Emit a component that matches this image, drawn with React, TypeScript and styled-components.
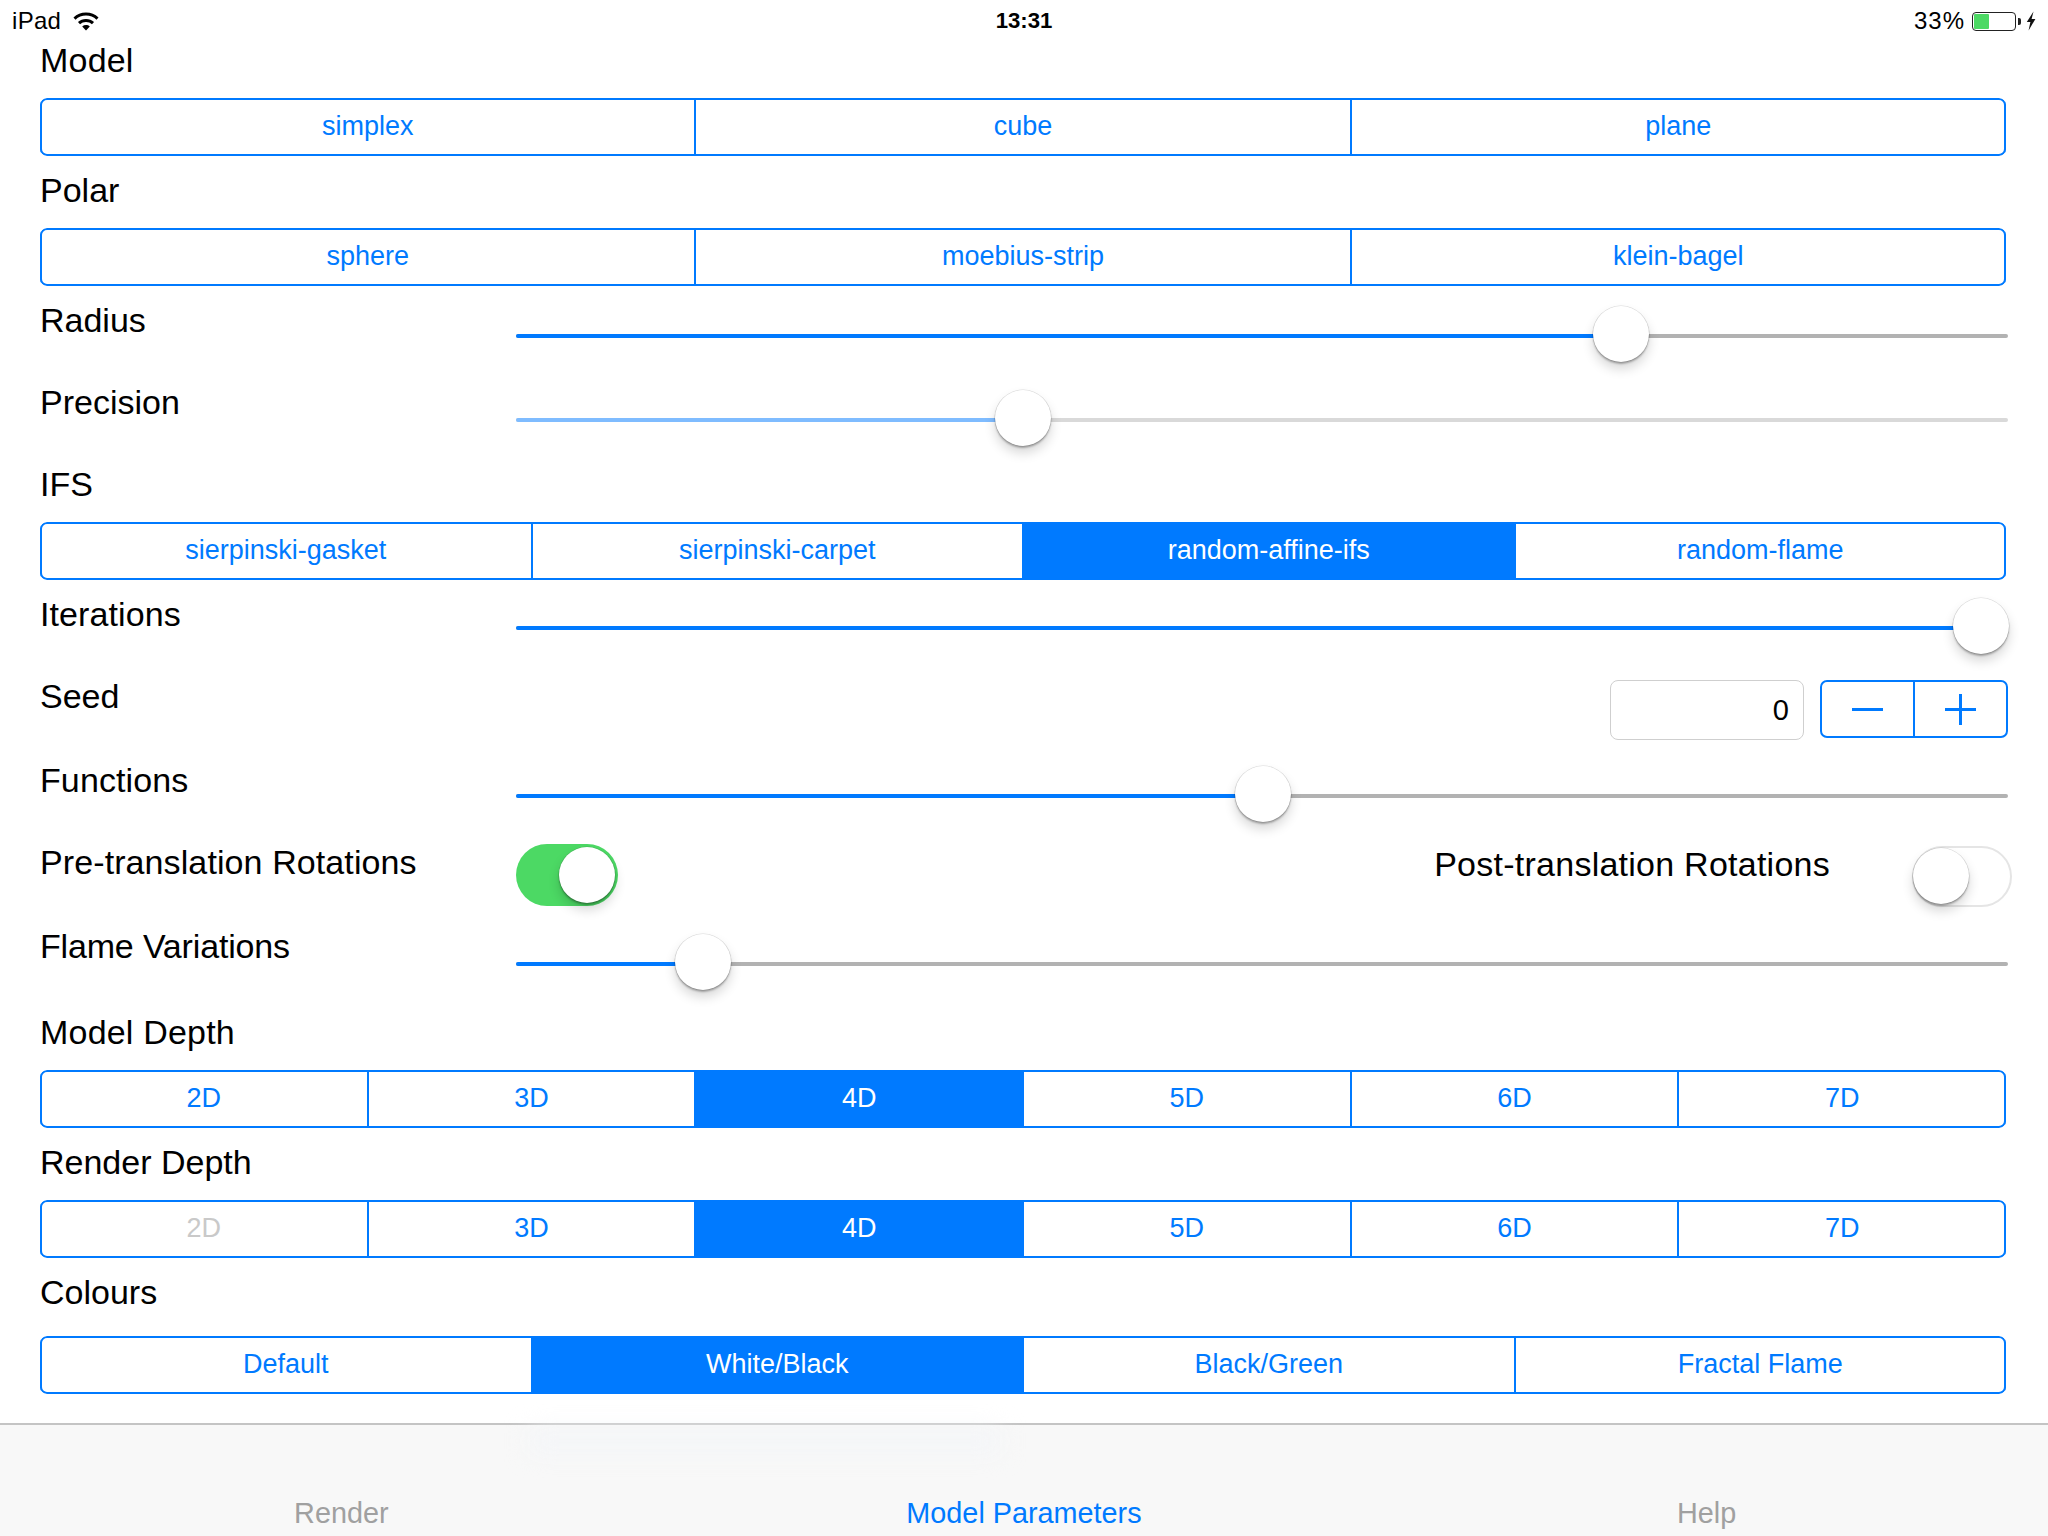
import React from "react";
import styled, { createGlobalStyle } from "styled-components";

const BLUE = "#007aff";

const Global = createGlobalStyle`
  html, body { margin: 0; padding: 0; background: #fff; }
  body { font-family: "Liberation Sans", Arial, sans-serif; color: #000; }
  * { box-sizing: border-box; }
`;

const Page = styled.div`
  width: 2048px;
  height: 1536px;
  display: flex;
  flex-direction: column;
  overflow: hidden;
  background: #fff;
`;

const StatusBar = styled.div`
  height: 40px;
  flex: none;
  display: grid;
  grid-template-columns: 1fr auto 1fr;
  align-items: center;
  padding: 2px 12px 0 12px;
  font-size: 24px;
`;

const StatusLeft = styled.div`
  display: flex;
  align-items: center;
  gap: 12px;
  letter-spacing: 0.3px;
`;

const StatusTime = styled.div`
  font-size: 22.2px;
  font-weight: 700;
`;

const StatusRight = styled.div`
  display: flex;
  align-items: center;
  justify-content: flex-end;
`;

const Percent = styled.span`
  margin-right: 7px;
  letter-spacing: 1px;
`;

const Battery = styled.div`
  width: 44px;
  height: 19px;
  border: 1px solid #222;
  border-radius: 4px;
  padding: 1px;
  display: flex;
`;

const BatteryFill = styled.div`
  width: 15px;
  background: #4cd964;
  border-radius: 1px;
`;

const BatteryTip = styled.div`
  width: 3px;
  height: 7px;
  margin: 0 5px 0 2px;
  background: #222;
  border-radius: 0 2px 2px 0;
`;

const Content = styled.div`
  flex: 1;
  padding: 0 40px;
`;

const Caption = styled.div<{ $spacing?: number }>`
  font-size: 34px;
  line-height: 40px;
  white-space: nowrap;
  letter-spacing: ${(p) => p.$spacing ?? 0}px;
`;

const CaptionRow = styled.div<{ $height?: number }>`
  height: ${(p) => p.$height ?? 58}px;
`;

const Segments = styled.div<{ $count: number }>`
  position: relative;
  display: grid;
  grid-template-columns: repeat(${(p) => p.$count}, 1fr);
  height: 58px;
  margin: 0 2px 14px 0;
  border-radius: 7px;
  overflow: hidden;
  &::after {
    content: "";
    position: absolute;
    inset: 0;
    border: 2px solid ${BLUE};
    border-radius: 7px;
    pointer-events: none;
  }
`;

const Segment = styled.div<{ $selected?: boolean; $disabled?: boolean }>`
  display: flex;
  align-items: center;
  justify-content: center;
  padding-bottom: 1px;
  font-size: 27px;
  background: ${(p) => (p.$selected ? BLUE : "#fff")};
  color: ${(p) => (p.$selected ? "#fff" : p.$disabled ? "#c9c9c9" : BLUE)};
  box-shadow: inset 1px 0 0 ${BLUE}, inset -1px 0 0 ${BLUE};
`;

const ControlRow = styled.div<{ $height: number }>`
  height: ${(p) => p.$height}px;
  display: grid;
  grid-template-columns: 476px 1fr;
`;

const SliderArea = styled.div<{ $trackTop: number }>`
  padding-top: ${(p) => p.$trackTop}px;
`;

const Track = styled.div<{ $dim?: boolean }>`
  position: relative;
  height: 4px;
  border-radius: 2px;
  background: ${(p) => (p.$dim ? "#d9d9d9" : "#b2b2b2")};
`;

const TrackFill = styled.div<{ $dim?: boolean }>`
  position: absolute;
  left: 0;
  top: 0;
  bottom: 0;
  border-radius: 2px 0 0 2px;
  background: ${(p) => (p.$dim ? "#7fbcff" : BLUE)};
`;

const Knob = styled.div`
  width: 56px;
  height: 56px;
  border-radius: 50%;
  background: #fff;
  box-shadow: 0 0 0 0.5px rgba(0, 0, 0, 0.14), 0 2px 2px rgba(0, 0, 0, 0.28),
    0 7px 12px rgba(0, 0, 0, 0.16);
`;

const SliderKnob = styled(Knob)`
  position: absolute;
  top: -28px;
`;

const SeedControls = styled.div`
  display: flex;
  justify-content: flex-end;
  align-items: flex-start;
  gap: 16px;
  padding-top: 4px;
`;

const SeedField = styled.div`
  width: 194px;
  height: 60px;
  border: 1px solid #cfcfcf;
  border-radius: 8px;
  display: flex;
  align-items: center;
  justify-content: flex-end;
  padding: 0 14px 0 0;
  font-size: 29px;
`;

const Stepper = styled.div`
  width: 188px;
  height: 58px;
  border: 2px solid ${BLUE};
  border-radius: 7px;
  display: flex;
`;

const StepButton = styled.div`
  flex: 1 1 0;
  display: flex;
  align-items: center;
  justify-content: center;
  & + & {
    border-left: 2px solid ${BLUE};
  }
`;

const ToggleArea = styled.div`
  display: flex;
  justify-content: space-between;
  align-items: flex-start;
  margin-right: -4px;
  padding-top: 2px;
`;

const PostGroup = styled.div`
  display: flex;
  align-items: flex-start;
  gap: 82px;
`;

const Switch = styled.div<{ $on?: boolean }>`
  position: relative;
  width: ${(p) => (p.$on ? 102 : 100)}px;
  height: ${(p) => (p.$on ? 62 : 61)}px;
  margin-top: ${(p) => (p.$on ? 0 : 2)}px;
  border-radius: 31px;
  background: ${(p) => (p.$on ? "#4cd964" : "#fff")};
  border: ${(p) => (p.$on ? "none" : "2px solid #e5e5e5")};
`;

const SwitchKnob = styled(Knob)<{ $on?: boolean }>`
  position: absolute;
  top: ${(p) => (p.$on ? 3 : 0)}px;
  ${(p) => (p.$on ? "right: 3px;" : "left: -1px;")}
`;

const TabBar = styled.div`
  position: relative;
  flex: none;
  height: 113px;
  background: #f8f8f8;
  border-top: 2px solid #c4c4c4;
  display: grid;
  grid-template-columns: repeat(3, 1fr);
  &::before {
    content: "";
    position: absolute;
    left: 530px;
    top: 6px;
    width: 470px;
    height: 20px;
    background: #f3f5f8;
    filter: blur(12px);
  }
`;

const Tab = styled.div<{ $active?: boolean }>`
  position: relative;
  display: flex;
  align-items: flex-end;
  justify-content: center;
  padding-bottom: 6px;
  font-size: 28.8px;
  line-height: 34px;
  color: ${(p) => (p.$active ? BLUE : "#a0a0a0")};
`;

const Wifi = () => (
  <svg width="26" height="19" viewBox="0 0 26 19" fill="none">
    <path d="M1.5 6.6C7.8 0.6 18.2 0.6 24.5 6.6" stroke="#000" strokeWidth="3" />
    <path d="M6 11.2C9.8 7.6 16.2 7.6 20 11.2" stroke="#000" strokeWidth="3" />
    <path d="M9.2 14.4C11.4 12.6 14.6 12.6 16.8 14.4L13 18.5Z" fill="#000" />
  </svg>
);

const Bolt = () => (
  <svg width="10" height="20" viewBox="0 0 10 20">
    <path d="M7.5 0.5L0.8 11H4.4L2.6 19.5L9.4 8H5.6Z" fill="#111" />
  </svg>
);

const Minus = () => (
  <svg width="31" height="3" viewBox="0 0 31 3">
    <rect width="31" height="3" fill={BLUE} />
  </svg>
);

const Plus = () => (
  <svg width="31" height="31" viewBox="0 0 31 31">
    <rect y="14" width="31" height="3" fill={BLUE} />
    <rect x="14" width="3" height="31" fill={BLUE} />
  </svg>
);

const SegmentGroup = ({
  items,
  selected,
  disabled,
}: {
  items: string[];
  selected?: string;
  disabled?: string;
}) => (
  <Segments $count={items.length}>
    {items.map((item) => (
      <Segment key={item} $selected={item === selected} $disabled={item === disabled}>
        {item}
      </Segment>
    ))}
  </Segments>
);

const SliderRow = ({
  label,
  value,
  trackTop,
  dim,
  height = 82,
  spacing,
}: {
  label: string;
  value: number;
  trackTop: number;
  dim?: boolean;
  height?: number;
  spacing?: number;
}) => (
  <ControlRow $height={height}>
    <Caption $spacing={spacing}>{label}</Caption>
    <SliderArea $trackTop={trackTop}>
      <Track $dim={dim}>
        <TrackFill $dim={dim} style={{ width: `calc((100% - 56px) * ${value} + 28px)` }} />
        <SliderKnob style={{ left: `calc((100% - 56px) * ${value})` }} />
      </Track>
    </SliderArea>
  </ControlRow>
);

const depths = ["2D", "3D", "4D", "5D", "6D", "7D"];

export default function App() {
  return (
    <Page>
      <Global />
      <StatusBar>
        <StatusLeft>
          <span>iPad</span>
          <Wifi />
        </StatusLeft>
        <StatusTime>13:31</StatusTime>
        <StatusRight>
          <Percent>33%</Percent>
          <Battery>
            <BatteryFill />
          </Battery>
          <BatteryTip />
          <Bolt />
        </StatusRight>
      </StatusBar>
      <Content>
        <CaptionRow>
          <Caption $spacing={0.2}>Model</Caption>
        </CaptionRow>
        <SegmentGroup items={["simplex", "cube", "plane"]} />
        <CaptionRow>
          <Caption>Polar</Caption>
        </CaptionRow>
        <SegmentGroup items={["sphere", "moebius-strip", "klein-bagel"]} />
        <SliderRow label="Radius" value={0.75} trackTop={34} />
        <SliderRow label="Precision" value={0.3336} trackTop={36} dim />
        <CaptionRow>
          <Caption>IFS</Caption>
        </CaptionRow>
        <SegmentGroup
          items={["sierpinski-gasket", "sierpinski-carpet", "random-affine-ifs", "random-flame"]}
          selected="random-affine-ifs"
        />
        <SliderRow label="Iterations" value={1.0005} trackTop={32} spacing={0.1} />
        <ControlRow $height={84}>
          <Caption>Seed</Caption>
          <SeedControls>
            <SeedField>0</SeedField>
            <Stepper>
              <StepButton>
                <Minus />
              </StepButton>
              <StepButton>
                <Plus />
              </StepButton>
            </Stepper>
          </SeedControls>
        </ControlRow>
        <SliderRow label="Functions" value={0.5007} trackTop={34} spacing={0.1} />
        <ControlRow $height={84}>
          <Caption $spacing={0.1}>Pre-translation Rotations</Caption>
          <ToggleArea>
            <Switch $on>
              <SwitchKnob $on />
            </Switch>
            <PostGroup>
              <Caption $spacing={0.25}>Post-translation Rotations</Caption>
              <Switch>
                <SwitchKnob />
              </Switch>
            </PostGroup>
          </ToggleArea>
        </ControlRow>
        <SliderRow label="Flame Variations" value={0.1107} trackTop={36} height={86} spacing={-0.17} />
        <CaptionRow>
          <Caption $spacing={0.2}>Model Depth</Caption>
        </CaptionRow>
        <SegmentGroup items={depths} selected="4D" />
        <CaptionRow>
          <Caption>Render Depth</Caption>
        </CaptionRow>
        <SegmentGroup items={depths} selected="4D" disabled="2D" />
        <CaptionRow $height={64}>
          <Caption>Colours</Caption>
        </CaptionRow>
        <SegmentGroup
          items={["Default", "White/Black", "Black/Green", "Fractal Flame"]}
          selected="White/Black"
        />
      </Content>
      <TabBar>
        <Tab>Render</Tab>
        <Tab $active>Model Parameters</Tab>
        <Tab>Help</Tab>
      </TabBar>
    </Page>
  );
}
